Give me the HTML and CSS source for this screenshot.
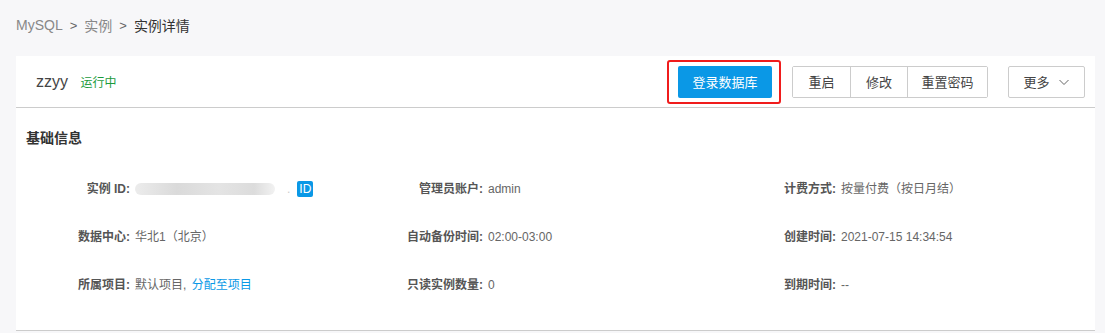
FILE: index.html
```html
<!DOCTYPE html>
<html lang="zh-CN">

<head>
    <meta charset="UTF-8">
    <meta name="viewport" content="width=device-width, initial-scale=1.0">
    <title>实例详情</title>
    <link rel="stylesheet" href="styles.css">
</head>

<body>
    <div class="breadcrumb">
        <span class="crumb">MySQL</span>
        <span class="sep">&gt;</span>
        <span class="crumb">实例</span>
        <span class="sep">&gt;</span>
        <span class="crumb current">实例详情</span>
    </div>

    <div class="card">
        <div class="card-header">
            <div class="title">
                <span class="name">zzyy</span>
                <span class="status">运行中</span>
            </div>
            <div class="actions">
                <span class="highlight">
                    <button class="btn-primary">登录数据库</button>
                </span>
                <div class="btn-group">
                    <button class="btn">重启</button>
                    <button class="btn">修改</button>
                    <button class="btn wide">重置密码</button>
                </div>
                <button class="btn btn-more">
                    更多
                    <svg class="chevron" viewBox="0 0 12 12" xmlns="http://www.w3.org/2000/svg">
                        <path d="M1.5 4l4.5 4.5 4.5-4.5" fill="none" stroke="#666" stroke-width="1" />
                    </svg>
                </button>
            </div>
        </div>

        <div class="section">
            <h3 class="section-title">基础信息</h3>
            <div class="info-grid">
                <div class="item">
                    <span class="label">实例 ID:</span>
                    <span class="value id-value">
                        <span class="masked"></span><span class="dot">.</span><span class="badge">ID</span>
                    </span>
                </div>
                <div class="item">
                    <span class="label">管理员账户:</span>
                    <span class="value">admin</span>
                </div>
                <div class="item">
                    <span class="label">计费方式:</span>
                    <span class="value">按量付费（按日月结）</span>
                </div>
                <div class="item">
                    <span class="label">数据中心:</span>
                    <span class="value">华北1（北京）</span>
                </div>
                <div class="item">
                    <span class="label">自动备份时间:</span>
                    <span class="value">02:00-03:00</span>
                </div>
                <div class="item">
                    <span class="label">创建时间:</span>
                    <span class="value">2021-07-15 14:34:54</span>
                </div>
                <div class="item">
                    <span class="label">所属项目:</span>
                    <span class="value">默认项目, <a class="link" href="#">分配至项目</a></span>
                </div>
                <div class="item">
                    <span class="label">只读实例数量:</span>
                    <span class="value">0</span>
                </div>
                <div class="item">
                    <span class="label">到期时间:</span>
                    <span class="value">--</span>
                </div>
            </div>
        </div>
    </div>
</body>

</html>
```

FILE: styles.css
```css
body {
    margin: 0;
    padding: 0 10px 0 16px;
    background-color: #f7f7f9;
    font-family: "Liberation Sans", "Noto Sans CJK SC", sans-serif;
    color: #333;
}

.breadcrumb {
    height: 56px;
    display: flex;
    align-items: center;
    font-size: 14px;
    color: #888;
    padding-bottom: 6px;
    box-sizing: border-box;
}

.sep {
    margin: 0 7px;
    font-size: 13px;
    color: #666;
}

.current {
    color: #333;
}

.card {
    background-color: #fff;
    border-bottom: 1px solid #ccc;
}

.card-header {
    display: flex;
    justify-content: space-between;
    align-items: center;
    height: 51px;
    padding: 0 10px 0 20px;
    border-bottom: 1px solid #ccc;
}

.name {
    font-size: 16px;
    color: #444;
}

.status {
    font-size: 12px;
    color: #1a9b3c;
    margin-left: 8px;
}

.actions {
    display: flex;
    align-items: center;
}

/* marco rojo de anotación alrededor del botón */
.highlight {
    display: flex;
    padding: 4px 7px 4px 9px;
    border: 2px solid #f01c1c;
    border-radius: 3px;
    margin-right: 11px;
}

button {
    font-family: inherit;
    font-size: 13px;
    height: 32px;
    cursor: pointer;
    padding: 0;
}

.btn-primary {
    width: 94px;
    background-color: #0a98e6;
    color: #fff;
    border: none;
    border-radius: 2px;
}

.btn-group {
    display: flex;
    border: 1px solid #ccc;
    border-radius: 2px;
    height: 32px;
    box-sizing: border-box;
}

.btn {
    background-color: #fff;
    color: #444;
    border: none;
    width: 57px;
    height: 30px;
}

.btn + .btn {
    border-left: 1px solid #ccc;
}

.btn.wide {
    width: 80px;
}

.btn-more {
    width: 77px;
    height: 32px;
    margin-left: 20px;
    border: 1px solid #ccc;
    border-radius: 2px;
    display: flex;
    align-items: center;
    justify-content: center;
    gap: 8px;
}

.chevron {
    width: 12px;
    height: 12px;
}

.section {
    padding: 20px 10px 21px 10px;
}

.section-title {
    margin: 0;
    font-size: 14px;
    font-weight: bold;
    color: #333;
    line-height: 20px;
}

.info-grid {
    display: grid;
    grid-template-columns: repeat(3, 353px);
    grid-auto-rows: 48px;
    margin-top: 17px;
}

.item {
    display: flex;
    align-items: center;
    font-size: 12px;
    line-height: 20px;
}

.label {
    width: 104px;
    text-align: right;
    font-weight: bold;
    color: #555;
    flex-shrink: 0;
}

.value {
    margin-left: 5px;
    color: #666;
}

.id-value {
    display: flex;
    align-items: center;
}

.link {
    color: #0a98e6;
    text-decoration: none;
    margin-left: 2px;
}

.masked {
    display: inline-block;
    width: 140px;
    height: 12px;
    border-radius: 6px;
    background: linear-gradient(90deg, #ececec, #dadada 30%, #e4e4e4 60%, #dcdcdc 85%, #f2f2f2);
}

.dot {
    color: #ccc;
    margin: 0 7px 0 12px;
}

.badge {
    background-color: #0a98e6;
    color: #fff;
    font-size: 12px;
    padding: 1px 2px;
    border-radius: 2px;
    line-height: 14px;
}
```
